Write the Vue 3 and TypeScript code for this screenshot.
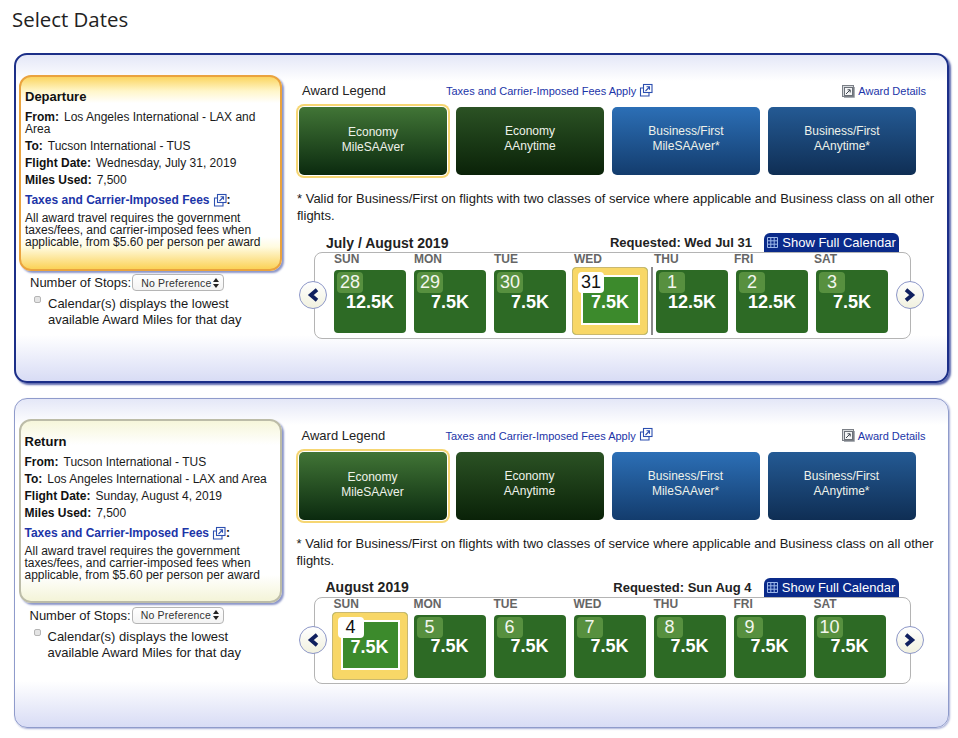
<script setup lang="ts">
interface Day { date: number; miles: string; selected?: boolean; monthStart?: boolean }
interface Panel {
  kind: string; active: boolean; title: string; from: string; to: string; flightDate: string;
  month: string; requested: string; days: Day[];
}
const weekdays = ['SUN', 'MON', 'TUE', 'WED', 'THU', 'FRI', 'SAT'];
const legend = [
  { cls: 'eco-saver', lines: ['Economy', 'MileSAAver'] },
  { cls: 'eco-any', lines: ['Economy', 'AAnytime'] },
  { cls: 'biz-saver', lines: ['Business/First', 'MileSAAver*'] },
  { cls: 'biz-any', lines: ['Business/First', 'AAnytime*'] },
];
const panels: Panel[] = [
  {
    kind: 'departure', active: true, title: 'Departure',
    from: 'Los Angeles International - LAX and Area', to: 'Tucson International - TUS',
    flightDate: 'Wednesday, July 31, 2019', month: 'July / August 2019', requested: 'Requested: Wed Jul 31',
    days: [
      { date: 28, miles: '12.5K' }, { date: 29, miles: '7.5K' }, { date: 30, miles: '7.5K' },
      { date: 31, miles: '7.5K', selected: true }, { date: 1, miles: '12.5K', monthStart: true },
      { date: 2, miles: '12.5K' }, { date: 3, miles: '7.5K' },
    ],
  },
  {
    kind: 'return', active: false, title: 'Return',
    from: 'Tucson International - TUS', to: 'Los Angeles International - LAX and Area',
    flightDate: 'Sunday, August 4, 2019', month: 'August 2019', requested: 'Requested: Sun Aug 4',
    days: [
      { date: 4, miles: '7.5K', selected: true }, { date: 5, miles: '7.5K' }, { date: 6, miles: '7.5K' },
      { date: 7, miles: '7.5K' }, { date: 8, miles: '7.5K' }, { date: 9, miles: '7.5K' }, { date: 10, miles: '7.5K' },
    ],
  },
];
</script>

<template>
  <main class="page">
    <h1 class="title">Select Dates</h1>
    <section v-for="p in panels" :key="p.kind" class="panel" :class="p.kind">
      <div class="left">
        <div class="info">
          <h2>{{ p.title }}</h2>
          <p><b>From:</b>{{ p.from }}</p>
          <p><b>To:</b>{{ p.to }}</p>
          <p><b>Flight Date:</b>{{ p.flightDate }}</p>
          <p><b>Miles Used:</b>7,500</p>
          <p class="fees">
            <a>Taxes and Carrier-Imposed Fees</a>
            <svg class="ext" viewBox="0 0 14 14" width="14" height="14"><rect x="4.500" y="1.500" width="8.500" height="8" /><path d="M4.500 5H1.500v8H10V9.500M6.500 8l4-4M7.500 3.800h3v3" /></svg><b>:</b>
          </p>
          <p class="small">All award travel requires the government taxes/fees, and carrier-imposed fees when applicable, from $5.60 per person per award</p>
        </div>
        <div class="stops">
          <span>Number of Stops:</span>
          <div class="select">No Preference
            <svg viewBox="0 0 6 10" width="6" height="10"><path d="M3 0 6 4H0zM3 10 0 6h6z" fill="#222" /></svg>
          </div>
        </div>
        <div class="lowest">
          <i class="check"></i>
          <span>Calendar(s) displays the lowest<br />available Award Miles for that day</span>
        </div>
      </div>

      <div class="right">
        <div class="legend-head">
          <span class="legend-title">Award Legend</span>
          <a class="link">Taxes and Carrier-Imposed Fees Apply</a>
          <svg class="ext apply" viewBox="0 0 14 14" width="14" height="14"><rect x="4.500" y="1.500" width="8.500" height="8" /><path d="M4.500 5H1.500v8H10V9.500M6.500 8l4-4M7.500 3.800h3v3" /></svg>
          <div class="details">
            <svg viewBox="0 0 13 13" width="13" height="13"><rect x="0.500" y="0.500" width="11" height="11" fill="#d8dbde" stroke="#7b7f86" /><rect x="2.500" y="2.500" width="8" height="8" fill="#f4f5f6" stroke="#6b7078" /><path d="M4 9 8 5M5.500 4.800H8.200V7.500" fill="none" stroke="#3f4650" /><path d="M2 12.500H12.500V2" fill="none" stroke="#a8acb2" /></svg>
            <a class="link">Award Details</a>
          </div>
        </div>
        <div class="legend">
          <div v-for="l in legend" :key="l.cls" class="legend-btn" :class="l.cls">
            <span>{{ l.lines[0] }}</span><span>{{ l.lines[1] }}</span>
          </div>
        </div>
        <p class="note">* Valid for Business/First on flights with two classes of service where applicable and Business class on all other flights.</p>
        <div class="cal-head">
          <span class="month">{{ p.month }}</span>
          <span class="requested">{{ p.requested }}</span>
          <div class="show-full">
            <svg viewBox="0 0 11 11" width="11" height="11"><path d="M.5.5h10v10H.5zM.5 3.800h10M.5 7.200h10M3.800.5v10M7.200.5v10" fill="#0a2a8a" stroke="#9db8ea" /></svg>
            <span>Show Full Calendar</span>
          </div>
        </div>
        <div class="strip">
          <div class="weekdays"><span v-for="w in weekdays" :key="w">{{ w }}</span></div>
          <div class="tiles">
            <div v-for="d in p.days" :key="d.date" class="tile" :class="{ selected: d.selected, 'month-start': d.monthStart }">
              <span class="date">{{ d.date }}</span>
              <span class="miles">{{ d.miles }}</span>
            </div>
          </div>
          <div class="nav prev"><svg viewBox="0 0 12 14" width="12" height="14"><path d="M10 1.800 3.800 7l6.200 5.200" fill="none" stroke="#10205f" stroke-width="3.800" /></svg></div>
          <div class="nav next"><svg viewBox="0 0 12 14" width="12" height="14"><path d="M2 1.800 8.200 7 2 12.200" fill="none" stroke="#10205f" stroke-width="3.800" /></svg></div>
        </div>
      </div>
    </section>
  </main>
</template>

<style scoped>
.page {
  width: 958px;
  height: 738px;
  overflow: hidden;
  box-sizing: border-box;
  font-family: "Liberation Sans", Arial, sans-serif;
  color: #1a1a1a;
  background: #fff;
}
.title {
  margin: 0;
  height: 53px;
  padding: 7px 0 0 12px;
  box-sizing: border-box;
  font: 400 20.400px/24px "Open Sans", sans-serif;
  color: #222;
}
.panel {
  width: 935px;
  height: 330px;
  margin: 0 0 15px 14px;
  box-sizing: border-box;
  display: flex;
  gap: 14px;
  padding: 20px 0 0 3px;
  border: 2px solid #8f9bcb;
  border-radius: 13px;
  background:
    linear-gradient(#e4e7f7, #fff 26px, #fff calc(100% - 46px), #d8dcf5);
  box-shadow: 1px 1px 2px #a9b0d8;
}
.panel.departure {
  border-color: #1c2f88;
  box-shadow: 2px 2px 2px #5d69ae;
}
.panel.return {
  border-width: 1.500px;
  padding: 20.500px 0 0 3.500px;
}
.left { width: 263px; flex: none; }
.info {
  box-sizing: border-box;
  padding: 13px 6px 21px 4px;
  border: 2px solid #eaa33f;
  border-radius: 12px;
  background: linear-gradient(#fbd560, #fff6c9 14px, #fff 26px, #fff calc(100% - 32px), #fffbe0 calc(100% - 22px), #fbd257);
  box-shadow: 2px 2px 2px #8c96c9;
  font-size: 12px;
  line-height: 12px;
}
.return .info {
  margin-top: -1px;
  padding-top: 14px;
  padding-bottom: 20px;
  border-color: #bcbca8;
  background: linear-gradient(#f6f6da, #fff 24px, #fff calc(100% - 26px), #f4f4d8);
}
.info h2 { margin: 0 0 7px; font-size: 13px; line-height: 14px; font-weight: 700; color: #111; }
.info p { margin: 0 0 5px; }
.info p b { margin-right: 5px; color: #111; }
.info .fees { margin: 7px 0 5px; display: flex; align-items: center; font-weight: 700; }
.info .fees a { color: #1c35a8; }
.info .fees b { margin: 0; }
.info .small { margin: 0; }
.ext { flex: none; margin-left: 3px; fill: none; stroke: #2c4fb0; stroke-width: 1.100; }
.stops {
  display: flex;
  align-items: center;
  margin: 3px 0 0 11px;
  height: 17px;
  font-size: 13px;
}
.return .stops { margin-top: 4px; }
.select {
  width: 92px;
  height: 17px;
  margin-left: 1px;
  box-sizing: border-box;
  display: flex;
  align-items: center;
  justify-content: space-between;
  padding: 0 4px 0 8px;
  border: 1px solid #b5b5b5;
  border-radius: 4px;
  background: linear-gradient(#fff, #f3f3f3);
  font-size: 10.500px;
  letter-spacing: 0.2px;
  color: #333;
}
.lowest { display: flex; margin: 5px 0 0 15px; font-size: 13px; line-height: 16px; }
.return .lowest { margin-top: 5px; }
.check {
  width: 7px;
  height: 7px;
  box-sizing: border-box;
  flex: none;
  margin: 0 7px 0 0;
  border: 1px solid #b5b5b5;
  border-radius: 2px;
  background: #e4e4e4;
}
.right { width: 651px; flex: none; }
.legend-head { display: flex; align-items: center; height: 32px; }
.legend-title { width: 144px; margin-left: 6px; padding-bottom: 1px; font-size: 13px; color: #222; }
.link { font-size: 11px; color: #1c35a8; }
.apply { margin: -3px 0 0 3px; }
.details { margin-left: auto; margin-right: 21px; display: flex; align-items: center; gap: 3px; }
.legend { display: flex; gap: 8px; padding-left: 3px; }
.legend-btn {
  width: 148px;
  height: 68px;
  box-sizing: border-box;
  display: flex;
  flex-direction: column;
  align-items: center;
  justify-content: center;
  padding-bottom: 4px;
  border-radius: 5px;
  color: #eef2ea;
  font-size: 12px;
  line-height: 15px;
}
.eco-saver {
  margin-right: 1px;
  padding-bottom: 2px;
  background: linear-gradient(#417536, #0b2a0f);
  box-shadow: 0 0 0 1px #fff, 0 0 0 3px #f6d673;
}
.eco-any { background: linear-gradient(#2b5224, #0a2208); }
.biz-saver { background: linear-gradient(#2c6fb6, #133c6d); }
.biz-any { background: linear-gradient(#245a94, #0f2e54); }
.note { margin: 15px 0 0 1px; width: 645px; font-size: 13px; line-height: 17px; color: #1a1a1a; }
.cal-head { display: flex; align-items: center; height: 19px; margin-top: 9px; font-weight: 700; }
.month { margin-left: 30px; font-size: 14px; color: #222; }
.requested { margin-left: auto; font-size: 13px; color: #222; }
.show-full {
  width: 135px;
  height: 19px;
  margin: 0 48px 0 12px;
  flex: none;
  box-sizing: border-box;
  display: flex;
  align-items: center;
  justify-content: center;
  gap: 4px;
  border-radius: 6px 6px 0 0;
  background: #0a2a8a;
  color: #fff;
  font-size: 13px;
  font-weight: 400;
  white-space: nowrap;
}
.strip {
  position: relative;
  width: 597px;
  height: 87px;
  margin-left: 18px;
  box-sizing: border-box;
  padding: 0 0 0 19px;
  border: 1.500px solid #b4b4b4;
  border-radius: 8px;
  background: #fff;
}
.weekdays { display: flex; height: 13px; font-size: 12px; line-height: 13px; font-weight: 700; color: #666; }
.weekdays span { width: 80px; }
.tiles { display: flex; gap: 8px; margin-top: 4px; }
.tile {
  position: relative;
  width: 72px;
  height: 63px;
  flex: none;
  display: flex;
  align-items: center;
  justify-content: center;
  border-radius: 4px;
  background: #2d6a25;
}
.tile.selected {
  box-sizing: border-box;
  width: 76px;
  height: 68px;
  margin: -3px -2px -2px;
  padding-top: 2px;
  background: #3c8a2c;
  border: 1px solid #c9b870;
}
.tile.selected::before {
  content: "";
  position: absolute;
  inset: 0;
  border: solid #f8d767;
  border-width: 7px 7px 9px 8px;
  border-radius: 3px;
}
.tile.selected::after {
  content: "";
  position: absolute;
  inset: 7px 7px 9px 8px;
  border: 2px solid #fff;
}
.tile.month-start { margin-left: 2px; }
.tile.month-start::before {
  content: "";
  position: absolute;
  left: -5px;
  top: -3px;
  width: 2px;
  height: 68px;
  background: #8a8a8a;
}
.date {
  position: absolute;
  z-index: 1;
  left: 3px;
  top: 2px;
  width: 26px;
  height: 21px;
  display: flex;
  align-items: center;
  justify-content: center;
  border-radius: 4px;
  background: #57903f;
  color: #f2f6ee;
  font-size: 18px;
}
.selected .date {
  left: 5px;
  top: 4px;
  background: #fff;
  color: #111;
}
.miles { position: relative; z-index: 1; color: #fff; font-size: 18px; font-weight: 700; line-height: 20px; }
.nav {
  position: absolute;
  top: 28px;
  width: 28px;
  height: 28px;
  box-sizing: border-box;
  display: flex;
  align-items: center;
  justify-content: center;
  border: 1.500px solid #8d97c8;
  border-radius: 50%;
  background: linear-gradient(#fff, #f1f1df);
}
.prev { left: -16px; }
.next { right: -14px; }
</style>
